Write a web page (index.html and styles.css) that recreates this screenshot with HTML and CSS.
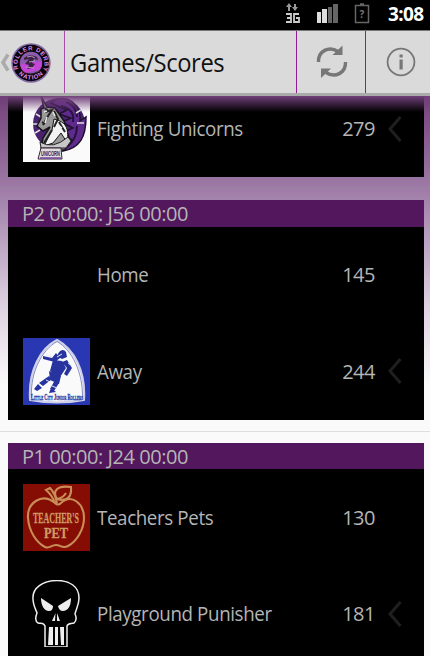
FILE: index.html
```html
<!DOCTYPE html>
<html lang="en">
<head>
<meta charset="utf-8">
<title>Games/Scores</title>
<link rel="stylesheet" href="styles.css">
</head>
<body>
<div class="phone">
  <div class="status">
    <svg class="status-icons" width="92" height="30" viewBox="0 0 92 30">
      <g fill="#999"><path d="M4 3l3 4H5v4H3V7H1zM9 4h2v3h2l-3 4-3-4h2z"/></g>
      <g fill="none" stroke="#ccc" stroke-width="1.800"><path d="M1 14h5v8H1M2 18h4M14 14H9v8h5v-4h-3"/></g>
      <path fill="#ddd" d="M32 12h4v11h-4zM37 9h5v14h-5z"/>
      <path fill="#666" d="M43 7h4v16h-4zM48 4h5v19h-5z"/>
      <path d="M70.500 5.500h13v17h-13zM75 4h4" fill="none" stroke="#666" stroke-width="1.500"/>
      <text x="77" y="18" text-anchor="middle" class="battery">?</text>
    </svg>
    <span class="clock">3:08</span>
  </div>
  <header class="bar">
    <div class="home">
      <svg width="54" height="62" viewBox="0 0 54 62">
        <path d="M8 23.500 3 31.500l5 8" fill="none" stroke="#aaa" stroke-width="3.500"/>
        <circle cx="31" cy="32" r="19.700" fill="#8269a4"/>
        <circle cx="31" cy="32" r="18.200" fill="#08050b"/>
        <circle cx="31" cy="32" r="11.200" fill="#8a5cab"/>
        <path d="M20.500 33l20.500-3 1 5-3 4-14 3-4-5z" fill="#c445d6"/>
        <path d="M24 27q5-5 13-1l1 3-4-1-2 4 3 1-3 4-5 1 2-4-4-1 4-5-5 1z" fill="#3b2043"/>
        <path d="M27 26q5-2 8 1M29 31l6-1M26 36l8 1" stroke="#b195bd" fill="none"/>
        <path d="M23 40q7 5 15 0l-3 3h-8z" fill="#241329"/>
        <path id="top-arc" d="M18.500 38a13.500 13.500 0 1 1 25 0" fill="none"/>
        <path id="bottom-arc" d="M17.500 41.500a16.500 16.500 0 0 0 27 0" fill="none"/>
        <text class="badge-text"><textPath href="#top-arc" textLength="54">ROLLER DERBY</textPath></text>
        <text class="badge-text"><textPath href="#bottom-arc" startOffset="2" textLength="27">NATION</textPath></text>
      </svg>
    </div>
    <h1>Games/Scores</h1>
    <div class="action">
      <svg width="34" height="36" viewBox="0 0 34 36" fill="none" stroke="#777" stroke-width="3.400">
        <path d="M3.500 18C3 7 14 1.500 23 7.500M30.500 18C31 29 20 34.500 11 28.500"/>
        <path d="M27.500 1.500v9.500h-10zM6 34v-9.500h10z" fill="#777" stroke="none"/>
      </svg>
    </div>
    <div class="action info">
      <svg width="30" height="30" viewBox="0 0 30 30">
        <circle cx="15" cy="15" r="13.400" fill="none" stroke="#777" stroke-width="1.800"/>
        <path d="M13.500 7.500h3.200v3h-3.200zM13.500 12.500h3.200v10h-3.200z" fill="#777"/>
      </svg>
    </div>
  </header>
  <main class="list">
    <section class="card first">
      <div class="row">
        <svg class="logo" viewBox="0 0 67 67">
          <path fill="#fafafa" d="M0 0h67v67H0z"/>
          <circle cx="36" cy="29" r="26" fill="#49226f"/>
          <path d="M28 8C43-4 59 10 57 26l6-4c0 20-6 31-23 34l9-11-10-7 11-5-11-6 9-4-12-4 8-4z" fill="#5e2b8d" stroke="#20102e" stroke-width="1.500"/>
          <path d="M43 7q11 4 11 15M38 11q14 3 12 16M54 31q0 13-10 21" fill="none" stroke="#27113d" stroke-width="2"/>
          <path d="M13 19l5 3M10 29h6M12 38l5-3M53 18l5-3M54 28h7" stroke="#ddd" stroke-width="1.500"/>
          <path d="M18 1l6 11 8 1 9 13 5 17-4 12H18l2-12 7-11-7 4-6-5 4-8v-9l3-1z" fill="#999" stroke="#17131a" stroke-width="1.500"/>
          <path d="M31 24c17 4 13 15 14 25l-7-11-8 10-9 3 8-16z" fill="#f3f3f3" stroke="#161616"/>
          <path d="M22 17l7-2-4 6-5 9M31 16l4 8-4 8M36 27l6 10M29 35l-8 13M19 27l3 2M22 13l3 3" fill="none" stroke="#222" stroke-width="2"/>
          <path d="M21 17l3-1M24 22l-2 6M30 17l2 4M34 29l5 4" stroke="#ececec" stroke-width="1.500"/>
          <path d="M17 47q13 8 28-5l3 4-5 7H18z" fill="#c8c8c8" stroke="#222"/>
          <path d="M18 53h20l1 11H15z" fill="#ddd" stroke="#39253d"/>
          <text x="27.500" y="61" text-anchor="middle" class="plinth" textLength="19" lengthAdjust="spacingAndGlyphs">UNICORN</text>
          <path d="M17 63h21" stroke="#77479a" stroke-width="1.500"/>
        </svg>
        <span class="name">Fighting Unicorns</span><span class="score">279</span>
        <svg class="chevron" viewBox="0 0 14 26"><path d="M12.500 1 2 13l10.500 12"/></svg>
      </div>
    </section>
    <section class="card">
      <h2>P2 00:00: J56 00:00</h2>
      <div class="row">
        <span class="logo"></span><span class="name">Home</span><span class="score">145</span><span class="chevron"></span>
      </div>
      <div class="row">
        <svg class="logo" viewBox="0 0 67 67">
          <path fill="#2938b2" d="M0 0h67v67H0z"/>
          <path d="M34 2C18 10 5 32 7 62q27 5 54 0C63 33 51 11 34 2z" fill="#fafafa" stroke="#ced0e8" stroke-width="2"/>
          <path d="M34 3.500C19 12 7 34 8.500 60M34 3.500C49 12 60 34 59.500 60" fill="none" stroke="#3947a0" stroke-width=".6"/>
          <g fill="#2734a0">
            <path d="M36 14q4-4 7 0l1 5-5 2-5-3zM30 22l9 1 4 7-6 9-10-6zM26 33l12 5-2 8-9-4zM20 18l9 2 4-5 4 5-5 4-12-3zM39 24l5-2 5 8-5 8-3-2 3-6z"/>
            <path d="M26 38l3 3-9 7-4-3zM32 42l4 3-5 8-4-2zM15 46l4 4-5 3-3-2zM28 50l5 4-7 1z"/>
          </g>
          <path d="M23 18h6M45 25l4 3M34 19l5-3M23 42l4 2M29 48l5 2" stroke="#e2e5f2"/>
          <text x="34" y="62" text-anchor="middle" class="rollers" textLength="52" lengthAdjust="spacingAndGlyphs">Little City Junior Rollers</text>
        </svg>
        <span class="name">Away</span><span class="score">244</span>
        <svg class="chevron" viewBox="0 0 14 26"><path d="M12.500 1 2 13l10.500 12"/></svg>
      </div>
    </section>
    <section class="card">
      <h2>P1 00:00: J24 00:00</h2>
      <div class="row">
        <svg class="logo" viewBox="0 0 67 67">
          <path fill="#850d04" d="M0 0h67v67H0z"/>
          <g fill="none" stroke="#c98e58" stroke-width="2.100">
            <path d="M32 19C19 8 4 19 5 34c1 14 9 25 17 29 5 2 6-2 11-2s6 4 12 1c8-4 16-16 16-28C61 20 49 9 38 19q-3 3-6 0z"/>
            <path d="M32 19Q29 11 23 6l4-2q5 5 7 15M34 15C29 7 34 1 48 3c1 10-4 15-14 12zM34 15q6-1 9-6"/>
          </g>
          <text x="33" y="39" text-anchor="middle" class="apple" textLength="46" lengthAdjust="spacingAndGlyphs">TEACHER'S</text>
          <text x="33" y="54" text-anchor="middle" class="apple" textLength="24" lengthAdjust="spacingAndGlyphs">PET</text>
        </svg>
        <span class="name">Teachers Pets</span><span class="score">130</span><span class="chevron"></span>
      </div>
      <div class="row">
        <svg class="logo" viewBox="0 0 67 67">
          <path d="M34 .5C20 .5 9 8 10 19c0 6 3 11 4 14-2 5-2 8 1 10 3 1 5-1 7 3v21h22V46c1-3 4-2 7-3 2-2 3-5 1-9 1-5 4-9 4-16C56 6 46 .5 34 .5z" fill="#000" stroke="#eee" stroke-width="1.500"/>
          <path d="M18 18l12 8q0 5-4 5c-5 0-8-6-8-13zM48 18l-13 8q1 5 5 5c5 0 8-5 8-13zM32.500 33L29 41h3zM34 33l3 8h-3zM26 47h4v18h-5zM32 47h3v18h-3zM37 47h4v18h-3z" fill="#eee"/>
        </svg>
        <span class="name">Playground Punisher</span><span class="score">181</span>
        <svg class="chevron" viewBox="0 0 14 26"><path d="M12.500 1 2 13l10.500 12"/></svg>
      </div>
    </section>
  </main>
</div>
</body>
</html>
```

FILE: styles.css
```css
* { box-sizing: border-box; }
body { margin: 0; font-family: "Open Sans", "Noto Sans", sans-serif; background: #000; }
.phone { width: 430px; height: 656px; overflow: hidden; display: flex; flex-direction: column; }
.status { height: 30px; flex: none; background: #000; display: flex; justify-content: flex-end; gap: 11px; padding-right: 4px; }
.battery { font: bold 10px "Open Sans", sans-serif; fill: #777; }
.clock { color: #fff; font: bold 19px/28px "Noto Sans", sans-serif; width: 38px; letter-spacing: -.6px; white-space: nowrap; }
.bar { height: 66px; flex: none; display: flex; background: #dadada; border-top: 1px solid #777; border-bottom: 3px solid #aaa; }
.home { width: 65px; border-right: 1px solid #a64ca9; flex: none; }
.home svg { display: block; }
.badge-text { font: bold 6px "Liberation Sans", sans-serif; fill: #e58be8; }
h1 { margin: 0; padding-left: 5px; flex: 1; font-size: 25px; line-height: 62px; font-weight: 400; letter-spacing: -.4px; color: #111; transform: scaleX(.95); transform-origin: 5px 50%; white-space: nowrap; }
.action { width: 69px; border-left: 1px solid #941a99; display: flex; align-items: center; justify-content: center; flex: none; padding-left: 1px; }
.action.info { width: 65px; padding-left: 5px; }
.list { flex: 1; min-height: 0; overflow: hidden; position: relative; background: linear-gradient(#74427b 0, #9872a0 80px, #b49abb 135px, #ded1e1 210px, #fafafa 290px); }
.list::before { content: ""; position: absolute; z-index: 2; left: 0; right: 0; top: 0; height: 16px; background: linear-gradient(#71407a, rgba(113,64,122,0)); }
.card { margin: 0 6.5px 0 8px; background: #000; position: relative; }
.card + .card { margin-top: 23px; }
.card + .card::before { content: ""; position: absolute; left: -8px; right: -7px; top: -12px; height: 1px; background: rgba(150,150,155,.28); }
.card.first { height: 81px; display: flex; flex-direction: column; justify-content: flex-end; }
h2 { margin: 0; height: 26.5px; padding-left: 14px; background: #52175c; color: #b5b5b5; font-size: 20px; line-height: 27px; font-weight: 400; letter-spacing: -.45px; }
.row { height: 96.5px; flex: none; padding: 0 21.5px 0 14.5px; display: flex; align-items: center; color: #b5b5b5; font-size: 20px; }
.logo { width: 67px; height: 67px; margin-right: 7.5px; flex: none; }
.name { flex: 1; letter-spacing: -.4px; white-space: nowrap; transform: scaleX(.937); transform-origin: 0 50%; }
.score { letter-spacing: -.5px; }
.chevron { width: 14px; height: 26px; margin-left: 13px; fill: none; stroke: #1f1f1f; stroke-width: 3; }
.plinth { font: bold 7px "Liberation Sans", sans-serif; fill: #3d204a; }
.rollers { font: bold 8.5px "Liberation Serif", serif; font-variant: small-caps; fill: #2432a0; stroke: #2432a0; stroke-width: .3px; }
.apple { font: bold 15px "Liberation Serif", serif; fill: #d19a65; stroke: #d19a65; stroke-width: .3px; }
```
